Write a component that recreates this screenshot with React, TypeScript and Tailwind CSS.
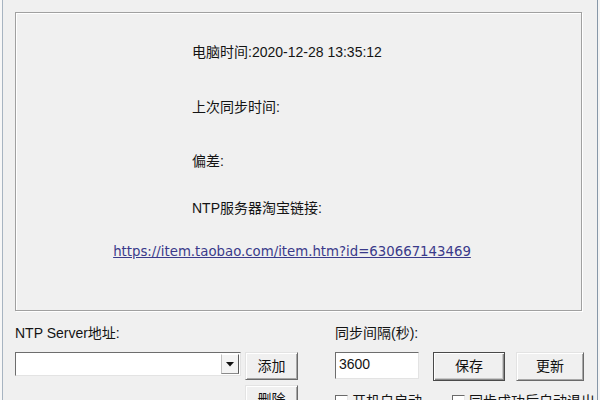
import React from "react";

function Btn({ children, w, def }: { children: React.ReactNode; w: string; def?: boolean }) {
  return (
    <div
      className={
        "h-full flex items-center justify-center text-[14px] text-[#111] bg-[#f0f0f0] " +
        w +
        (def
          ? " border border-[#4a4a4a] shadow-[inset_1px_1px_0_#fff,inset_-1px_-1px_0_#8a8a8a,inset_-2px_-2px_0_#c8c8c8]"
          : " border border-t-[#e3e3e3] border-l-[#e3e3e3] border-r-[#6a6a6a] border-b-[#6a6a6a] shadow-[inset_1px_1px_0_#fff,inset_-1px_-1px_0_#a8a8a8]")
      }
    >
      {children}
    </div>
  );
}

function Check({ label }: { label: string }) {
  return (
    <div className="flex items-start">
      <div className="w-[13px] h-[13px] bg-white border border-t-[#6a6a6a] border-l-[#6a6a6a] border-r-[#e8e8e8] border-b-[#e8e8e8] mt-[2px] shrink-0" />
      <span className="ml-[4px] leading-[17px] whitespace-nowrap">{label}</span>
    </div>
  );
}

export default function App() {
  return (
    <div className="w-[600px] h-[400px] overflow-hidden bg-[#f0f0f0] flex font-['Liberation_Sans','Noto_Sans_CJK_SC',sans-serif] text-[14px] text-[#141414]">
      <div className="w-[2px] h-full bg-[#f7f7f7]" />
      <div className="w-[1px] h-full bg-[#a7b4c1]" />
      <div className="flex-1 pl-[12px] pt-[12px]">
        <div className="w-[567px] h-[299px] border border-[#a0a0a0] shadow-[inset_1px_1px_0_#fff,1px_1px_0_#fff] pt-[31px]">
          <div className="pl-[176px] flex flex-col">
            <div className="h-[16px] leading-[16px]">电脑时间:2020-12-28 13:35:12</div>
            <div className="h-[16px] leading-[16px] mt-[39px]">上次同步时间:</div>
            <div className="h-[16px] leading-[16px] mt-[38px]">偏差:</div>
            <div className="h-[16px] leading-[16px] mt-[31px]">NTP服务器淘宝链接:</div>
          </div>
          <div className="mt-[27px] h-[16px] leading-[16px] text-center pr-[13px]">
            <span className="font-['DejaVu_Sans',sans-serif] text-[13.3px] text-[#3a3a8a] underline">
              https://item.taobao.com/item.htm?id=630667143469
            </span>
          </div>
        </div>
        <div className="flex mt-[14px]">
          <div className="w-[320px] flex flex-col">
            <div className="h-[16px] leading-[16px]">NTP Server地址:</div>
            <div className="flex mt-[11px] items-start">
              <div className="w-[226px] h-[24px] bg-white border border-t-[#6d6d6d] border-l-[#6d6d6d] border-r-[#e3e3e3] border-b-[#e3e3e3] flex justify-end p-[1px]">
                <div className="w-[18px] h-full bg-[#f4f4f4] border border-t-[#fff] border-l-[#c0c0c0] border-r-[#5a5a5a] border-b-[#8a8a8a] flex items-center justify-center">
                  <svg width="8" height="5" viewBox="0 0 8 5">
                    <path d="M0 0 H8 L4 4.5 Z" fill="#111" />
                  </svg>
                </div>
              </div>
              <div className="ml-[4px] h-[28px]">
                <Btn w="w-[53px]">添加</Btn>
              </div>
            </div>
            <div className="ml-[230px] mt-[5px] h-[28px]">
              <Btn w="w-[53px]">删除</Btn>
            </div>
          </div>
          <div className="flex flex-col">
            <div className="h-[16px] leading-[16px]">同步间隔(秒):</div>
            <div className="flex mt-[11px] items-start">
              <div className="w-[84px] h-[27px] bg-white border border-t-[#6d6d6d] border-l-[#6d6d6d] border-r-[#e3e3e3] border-b-[#e3e3e3] pl-[3px] leading-[22px]">
                3600
              </div>
              <div className="ml-[14px] h-[29px]">
                <Btn w="w-[72px]" def>
                  保存
                </Btn>
              </div>
              <div className="ml-[11px] h-[29px]">
                <Btn w="w-[68px]">更新</Btn>
              </div>
            </div>
            <div className="flex mt-[12px]">
              <div className="w-[117px]">
                <Check label="开机自启动" />
              </div>
              <Check label="同步成功后自动退出" />
            </div>
          </div>
        </div>
      </div>
      <div className="w-[1px] h-full bg-[#8797a8]" />
      <div className="w-[2px] h-full bg-[#f4f4f4]" />
    </div>
  );
}
